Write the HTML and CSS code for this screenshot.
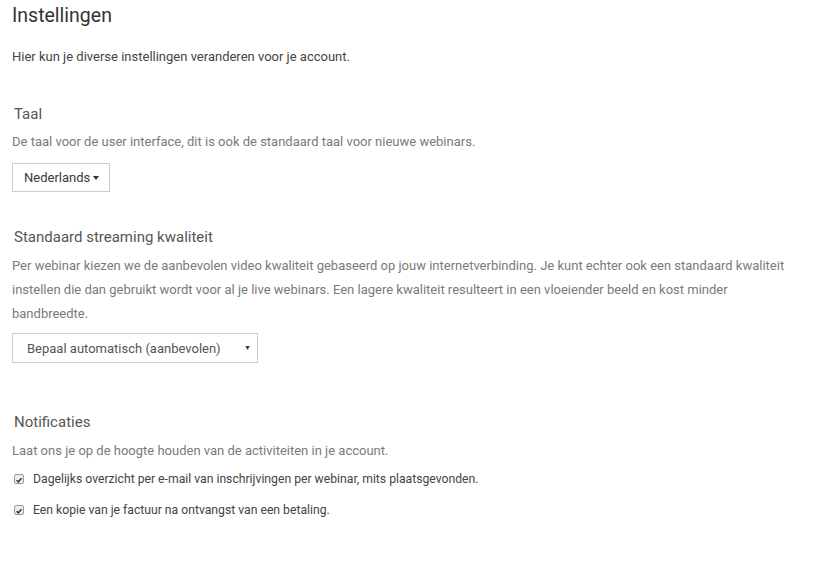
FILE: index.html
```html
<!DOCTYPE html>
<html lang="nl">
<head>
<meta charset="utf-8">
<title>Instellingen</title>
<link rel="stylesheet" href="styles.css">
</head>
<body>
<main class="page">
  <h1 class="title">Instellingen</h1>
  <p class="intro">Hier kun je diverse instellingen veranderen voor je account.</p>

  <section class="section section-lang">
    <h2 class="section-title">Taal</h2>
    <p class="section-desc">De taal voor de user interface, dit is ook de standaard taal voor nieuwe webinars.</p>
    <button class="dropdown-btn" type="button">Nederlands<span class="caret"></span></button>
  </section>

  <section class="section section-quality">
    <h2 class="section-title">Standaard streaming kwaliteit</h2>
    <p class="section-desc para">Per webinar kiezen we de aanbevolen video kwaliteit gebaseerd op jouw internetverbinding. Je kunt echter ook een standaard kwaliteit instellen die dan gebruikt wordt voor al je live webinars. Een lagere kwaliteit resulteert in een vloeiender beeld en kost minder bandbreedte.</p>
    <div class="select">
      <span class="select-label">Bepaal automatisch (aanbevolen)</span>
      <span class="select-arrow">▼</span>
    </div>
  </section>

  <section class="section section-notif">
    <h2 class="section-title">Notificaties</h2>
    <p class="section-desc notif-desc">Laat ons je op de hoogte houden van de activiteiten in je account.</p>
    <label class="check">
      <span class="box"><svg viewBox="0 0 10 10" width="10" height="10"><path d="M2 5.2 L4.1 7.3 L8.2 2.8" fill="none" stroke="#333" stroke-width="1.8"/></svg></span>
      <span class="check-label">Dagelijks overzicht per e-mail van inschrijvingen per webinar, mits plaatsgevonden.</span>
    </label>
    <label class="check">
      <span class="box"><svg viewBox="0 0 10 10" width="10" height="10"><path d="M2 5.2 L4.1 7.3 L8.2 2.8" fill="none" stroke="#333" stroke-width="1.8"/></svg></span>
      <span class="check-label">Een kopie van je factuur na ontvangst van een betaling.</span>
    </label>
  </section>
</main>
</body>
</html>
```

FILE: styles.css
```css
html, body {
  margin: 0;
  padding: 0;
  background: #fff;
}
body {
  font-family: Roboto, "Liberation Sans", sans-serif;
  color: #333;
}
.page {
  padding: 4px 12px 0 12px;
}
.title {
  margin: 0;
  font-size: 19.5px;
  font-weight: 400;
  line-height: 24px;
  color: #333;
}
.intro {
  margin: 20px 0 0 0;
  font-size: 13px;
  line-height: 18px;
  color: #444;
}
.section {
  display: flex;
  flex-direction: column;
  align-items: flex-start;
}
.section-lang { margin-top: 38px; }
.section-quality { margin-top: 35px; }
.section-notif { margin-top: 49px; }
.section-title {
  margin: 0 0 0 2px;
  font-size: 15px;
  font-weight: 400;
  line-height: 20px;
  color: #555;
}
.section-desc {
  margin: 9px 0 0 0;
  font-size: 13px;
  line-height: 18px;
  color: #7a7a7a;
}
.para {
  line-height: 24px;
  margin-top: 7px;
  max-width: 792px;
}
.notif-desc {
  margin-top: 10px;
}
.dropdown-btn {
  margin-top: 12px;
  height: 29px;
  padding: 0 10px 0 11px;
  border: 1px solid #ccc;
  background: #fff;
  font-family: inherit;
  font-size: 13px;
  color: #3a3a3a;
  display: flex;
  align-items: center;
  gap: 3px;
}
.caret {
  width: 0;
  height: 0;
  border-left: 3.5px solid transparent;
  border-right: 3.5px solid transparent;
  border-top: 4px solid #333;
}
.select {
  margin-top: 7px;
  width: 246px;
  height: 30px;
  box-sizing: border-box;
  border: 1px solid #ccc;
  display: flex;
  align-items: center;
  justify-content: space-between;
  padding: 0 6px 0 14px;
  font-size: 13px;
  color: #555;
}
.select-arrow {
  font-size: 7px;
  color: #333;
}
.check {
  display: flex;
  align-items: center;
  gap: 9px;
  margin-top: 10px;
  padding-left: 2px;
  font-size: 12.2px;
  color: #444;
  line-height: 18px;
}
.check + .check { margin-top: 13px; }
.box {
  width: 10px;
  height: 10px;
  box-sizing: border-box;
  border: 1px solid #999;
  border-radius: 2px;
  background: #eee;
  display: flex;
}
.box svg { display: block; }
```
